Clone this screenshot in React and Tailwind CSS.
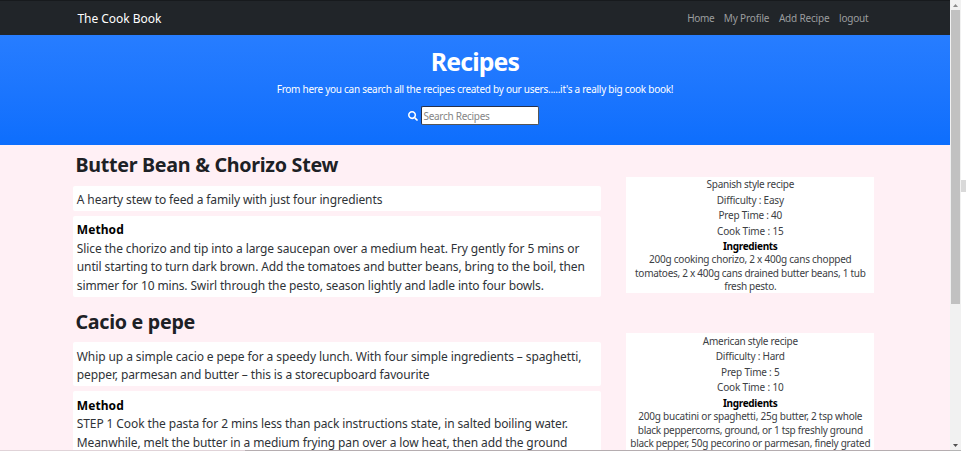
import { useLayoutEffect, useRef, useState } from "react";
import { FaSearch } from "react-icons/fa";

// One line of text, tracked so that it fills the given width.
function Line({ w, children, className = "" }) {
  const ref = useRef(null);
  const [spacing, setSpacing] = useState(0);
  useLayoutEffect(() => {
    const natural = ref.current.getBoundingClientRect().width;
    setSpacing((w - natural) / children.length);
  }, []);
  return (
    <span ref={ref} className={`inline-block whitespace-pre ${className}`} style={{ letterSpacing: `${spacing}px` }}>
      {children}
    </span>
  );
}

const navLinks = [
  ["Home", 27],
  ["My Profile", 45.5],
  ["Add Recipe", 50.5],
  ["logout", 29.5],
];

const recipes = [
  {
    title: ["Butter Bean & Chorizo Stew", 262.5],
    summary: [["A hearty stew to feed a family with just four ingredients", 305.5]],
    method: [
      ["Slice the chorizo and tip into a large saucepan over a medium heat. Fry gently for 5 mins or", 502.5],
      ["until starting to turn dark brown. Add the tomatoes and butter beans, bring to the boil, then", 508],
      ["simmer for 10 mins. Swirl through the pesto, season lightly and ladle into four bowls.", 467],
    ],
    facts: [
      ["Spanish style recipe", 87.5],
      ["Difficulty : Easy", 67],
      ["Prep Time : 40", 63.5],
      ["Cook Time : 15", 66.5],
    ],
    ingredients: [
      ["200g cooking chorizo, 2 x 400g cans chopped", 202.5],
      ["tomatoes, 2 x 400g cans drained butter beans, 1 tub", 230.5],
      ["fresh pesto.", 52],
    ],
  },
  {
    title: ["Cacio e pepe", 119.5],
    summary: [
      ["Whip up a simple cacio e pepe for a speedy lunch. With four simple ingredients – spaghetti,", 504.5],
      ["pepper, parmesan and butter – this is a storecupboard favourite", 352.5],
    ],
    method: [
      ["STEP 1 Cook the pasta for 2 mins less than pack instructions state, in salted boiling water.", 491],
      ["Meanwhile, melt the butter in a medium frying pan over a low heat, then add the ground", 490.5],
    ],
    facts: [
      ["American style recipe", 95],
      ["Difficulty : Hard", 69],
      ["Prep Time : 5", 58.5],
      ["Cook Time : 10", 66.5],
    ],
    ingredients: [
      ["200g bucatini or spaghetti, 25g butter, 2 tsp whole", 224],
      ["black peppercorns, ground, or 1 tsp freshly ground", 225],
      ["black pepper, 50g pecorino or parmesan, finely grated", 240],
    ],
  },
];

function Lines({ items, row }) {
  return items.map(([text, w]) => (
    <div key={text} className={row}>
      <Line w={w}>{text}</Line>
    </div>
  ));
}

function Recipe({ r }) {
  return (
    <section className="flex items-start pl-[73px]">
      <div className="w-[528.4px] shrink-0">
        <h2 className="h-[40.5px] pl-[2.5px] text-[19.7px] leading-[39px] font-bold text-[#1d2125]">
          <Line w={r.title[1]}>{r.title[0]}</Line>
        </h2>
        <div className="rounded-[2px] bg-white pt-[5.4px] pb-[1.4px] pl-[3.8px] text-[12px] text-[#2f3337]">
          <Lines items={r.summary} row="h-[18.6px] leading-[18.6px]" />
        </div>
        <div className="mt-[5px] rounded-[2px] bg-white pt-[5.4px] pb-[1.4px] pl-[3.8px] text-[12px] text-[#2f3337]">
          <div className="h-[18.6px] leading-[18.6px] font-bold text-black">
            <Line w={47}>Method</Line>
          </div>
          <Lines items={r.method} row="h-[18.6px] leading-[18.6px]" />
        </div>
      </div>
      <aside className="mt-[31.6px] ml-[25px] h-[116.5px] w-[247.8px] shrink-0 bg-white pt-[0.8px] text-center text-[10px] text-[#3c4044]">
        <Lines items={r.facts} row="h-[15.4px] leading-[15.4px]" />
        <div className="h-[14.4px] leading-[15px] font-bold text-black">
          <Line w={54.5}>Ingredients</Line>
        </div>
        <Lines items={r.ingredients} row="h-[13.5px] leading-[13.5px]" />
      </aside>
    </section>
  );
}

export default function App() {
  return (
    <div className="flex h-[451px] w-[966px] overflow-hidden bg-white font-['Noto_Sans','Open_Sans',sans-serif]">
      <div className="flex h-[451px] w-[950px] shrink-0 flex-col overflow-hidden bg-[#fff0f5]">
        <nav className="flex h-[35px] shrink-0 items-center justify-between border-t border-[#171a1d] bg-[#212529] pt-px pr-[81.5px] pl-[77.4px]">
          <span className="text-[12px] text-white">
            <Line w={84}>The Cook Book</Line>
          </span>
          <div className="flex gap-[9.6px] text-[10px] text-[#9b9d9f]">
            {navLinks.map(([label, w]) => (
              <a key={label}>
                <Line w={w}>{label}</Line>
              </a>
            ))}
          </div>
        </nav>
        <header className="flex h-[110px] shrink-0 flex-col items-center bg-linear-to-b from-[#277dff] to-[#0d6efd] text-white">
          <h1 className="mt-[9px] h-[34px] text-[24.8px] leading-[34px] font-bold">
            <Line w={88.5}>Recipes</Line>
          </h1>
          <p className="mt-[4px] h-[15px] text-[10px] leading-[15px]">
            <Line w={396.5}>From here you can search all the recipes created by our users.....it's a really big cook book!</Line>
          </p>
          <div className="mt-[9px] flex items-center gap-[3px] pr-[3px]">
            <FaSearch className="size-[10px]" />
            <div className="flex h-[19px] w-[118px] items-center rounded-[2px] border border-[#565656] border-t-[#26304a] border-l-[#26304a] bg-white pt-px pl-[1.5px] text-[10px] text-[#858585]">
              <Line w={66}>Search Recipes</Line>
            </div>
          </div>
        </header>
        <main className="flex h-[305px] flex-col gap-[8.5px] overflow-hidden">
          <div className="h-[148.2px] shrink-0">
            <Recipe r={recipes[0]} />
          </div>
          <div className="shrink-0">
            <Recipe r={recipes[1]} />
          </div>
        </main>
        <div className="flex h-px shrink-0">
          <div className="w-[245px] bg-[#e0d3d8]" />
          <div className="flex-1 bg-[#b5adb0]" />
        </div>
      </div>
      <div className="flex w-[10.5px] shrink-0 flex-col items-center border-b border-[#b5b5b5] bg-[#f1f1f1]">
        <div className="flex h-[10px] items-center">
          <svg viewBox="0 0 5 3" className="h-[3px] w-[5px] fill-[#8a8a8a]">
            <path d="M2.5 0 5 3H0z" />
          </svg>
        </div>
        <div className="h-[293.5px] w-[8.5px] bg-[#c1c1c1]" />
        <div className="flex-1" />
        <div className="flex h-[10px] items-center">
          <svg viewBox="0 0 5 3" className="h-[3px] w-[5px] fill-[#505050]">
            <path d="M0 0h5L2.5 3z" />
          </svg>
        </div>
      </div>
      <div className="flex-1 pt-[180px]">
        <div className="h-[12px] bg-[#d9d9d9]" />
      </div>
    </div>
  );
}
